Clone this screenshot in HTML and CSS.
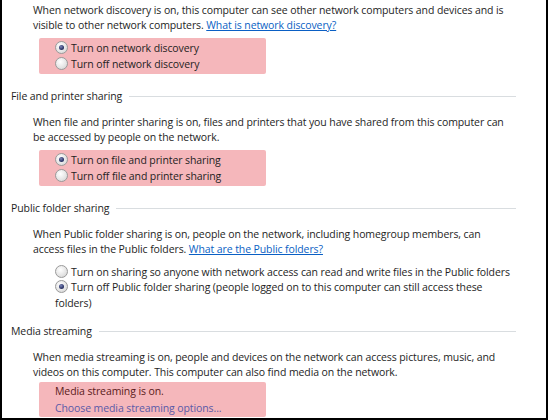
FILE: index.html
```html
<!DOCTYPE html>
<html>
<head>
<meta charset="utf-8">
<link rel="stylesheet" href="styles.css">
</head>
<body>
<div class="frame">
  <p class="desc first">When network discovery is on, this computer can see other network computers and devices and is<br>visible to other network computers. <a class="link" href="#">What is network discovery?</a></p>
  <div class="choices pink">
    <div class="opt"><span class="radio checked"></span>Turn on network discovery</div>
    <div class="opt"><span class="radio"></span>Turn off network discovery</div>
  </div>

  <div class="heading"><span>File and printer sharing</span><i class="rule"></i></div>
  <p class="desc">When file and printer sharing is on, files and printers that you have shared from this computer can<br>be accessed by people on the network.</p>
  <div class="choices pink">
    <div class="opt"><span class="radio checked"></span>Turn on file and printer sharing</div>
    <div class="opt"><span class="radio"></span>Turn off file and printer sharing</div>
  </div>

  <div class="heading"><span>Public folder sharing</span><i class="rule"></i></div>
  <p class="desc">When Public folder sharing is on, people on the network, including homegroup members, can<br>access files in the Public folders. <a class="link" href="#">What are the Public folders?</a></p>
  <div class="choices plain">
    <div class="opt"><span class="radio"></span>Turn on sharing so anyone with network access can read and write files in the Public folders</div>
    <div class="opt wrap"><span class="radio checked"></span>Turn off Public folder sharing (people logged on to this computer can still access these<br>folders)</div>
  </div>

  <div class="heading"><span>Media streaming</span><i class="rule"></i></div>
  <p class="desc">When media streaming is on, people and devices on the network can access pictures, music, and<br>videos on this computer. This computer can also find media on the network.</p>
  <div class="media pink">
    <div class="status">Media streaming is on.</div>
    <a class="options" href="#">Choose media streaming options...</a>
  </div>
</div>
</body>
</html>
```

FILE: styles.css
```css
html, body {
  margin: 0;
  padding: 0;
  background: #fff;
}

.frame {
  width: 548px;
  height: 420px;
  box-sizing: border-box;
  border-left: 2px solid #000;
  border-right: 2px solid #000;
  border-bottom: 2px solid #000;
  overflow: hidden;
  padding-top: 3px;
  font-family: "Open Sans", "Noto Sans", sans-serif;
  font-size: 10.5px;
  letter-spacing: -0.1px;
  color: #1e1e1e;
}

.desc {
  margin: 0 0 0 31px;
  line-height: 15px;
  white-space: nowrap;
}

.heading + .desc {
  margin-top: 11px;
}

.link {
  color: #0a5fc4;
  text-decoration: underline;
}

.pink {
  background: #f5b7bb;
  border-radius: 2px;
}

.choices {
  margin: 5px 0 0 37px;
  width: 227px;
  padding: 2px 0;
}

.choices.plain {
  width: auto;
  margin-top: 7px;
  padding: 0;
}

.choices.plain + .heading {
  margin-top: 12px;
}

.opt {
  line-height: 16px;
  padding-left: 16px;
  white-space: nowrap;
}

.opt.wrap {
  line-height: 15.5px;
}

.radio {
  display: inline-block;
  vertical-align: -2px;
  width: 11px;
  height: 11px;
  margin-right: 3px;
  border: 1px solid #9a9a9a;
  border-radius: 50%;
  background: radial-gradient(circle at 40% 35%, #ffffff 0%, #e6e6e6 55%, #cfcfcf 100%);
  position: relative;
  box-sizing: content-box;
}

.radio.checked::after {
  content: "";
  position: absolute;
  left: 3px;
  top: 3px;
  width: 5px;
  height: 5px;
  border-radius: 50%;
  background: radial-gradient(circle at 40% 35%, #7d86b8 0%, #2c3568 60%, #1b2250 100%);
}

.heading {
  display: flex;
  align-items: center;
  margin-top: 14px;
  padding-left: 9px;
  width: 505px;
  line-height: 16px;
}

.rule {
  flex: 1;
  height: 1px;
  margin-left: 7px;
  background: #d9dde0;
}

.media {
  margin: 2px 0 0 37px;
  width: 211px;
  padding: 1px 0 0 16px;
  line-height: 17px;
}

.status {
  color: #5a1a1a;
}

.options {
  color: #5a5aa8;
  text-decoration: none;
}
```
